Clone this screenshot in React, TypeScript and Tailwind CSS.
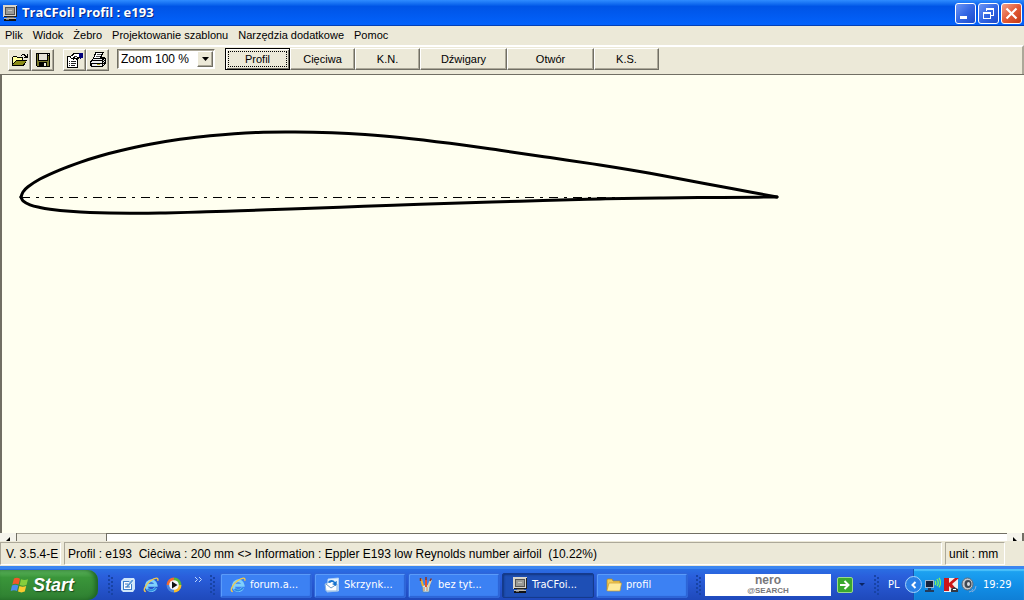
import React from "react";

type Point = [number, number];

const upper: Point[] = [
  [777, 197], [733, 188.8], [650, 173.3], [600, 165], [550, 157.6],
  [500, 150.3], [450, 143.3], [400, 137.4], [365, 134.5], [332, 132.8], [295, 132], [258, 132.4],
  [210, 135.7], [180, 139.3], [150, 144.3], [120, 150.8], [100, 156],
  [80, 162.3], [60, 169.8], [40, 179], [28, 186.8], [23, 192], [21, 197],
];

const lower: Point[] = [
  [21, 197], [23, 200.8], [30, 204.8], [40, 207.5], [50, 209.2], [70, 211.3], [90, 212.5],
  [130, 213.3], [160, 213.1], [200, 212], [240, 210.7], [290, 209],
  [340, 207.2], [400, 205], [460, 203], [520, 201.2],
  [600, 199], [660, 198], [720, 197.4], [777, 197],
];

function tangent(points: Point[], i: number): Point {
  const a = points[Math.max(0, i - 1)];
  const b = points[Math.min(points.length - 1, i + 1)];
  const length = Math.hypot(b[0] - a[0], b[1] - a[1]);
  return [(b[0] - a[0]) / length, (b[1] - a[1]) / length];
}

function smoothPath(points: Point[]): string {
  let d = `M${points[0][0]} ${points[0][1]}`;
  for (let i = 0; i < points.length - 1; i++) {
    const p = points[i];
    const q = points[i + 1];
    const t = tangent(points, i);
    const u = tangent(points, i + 1);
    const h = Math.hypot(q[0] - p[0], q[1] - p[1]) / 3;
    d += `C${p[0] + t[0] * h} ${p[1] + t[1] * h} ${q[0] - u[0] * h} ${q[1] - u[1] * h} ${q[0]} ${q[1]}`;
  }
  return d;
}

function ComputerIcon() {
  return (
    <svg width="16" height="16" viewBox="0 0 16 16" className="shrink-0" shapeRendering="crispEdges" aria-hidden="true">
      <path d="M1 0h14v12H1z" fill="#d8d4cb" />
      <path d="M14 1h1v11H2v-1h12z" fill="#222" />
      <path d="M3 2h10v8H3z" fill="#555" />
      <path d="M4 3h8v6H4z" fill="#9a9a96" />
      <path d="M6 5h4v1H6z" fill="#c7c7c0" />
      <path d="M5 12h7v1H5z" fill="#777" />
      <path d="M2 13h12v1H2z" fill="#bdb9b0" />
      <path d="M2 14h12v2H2z" fill="#111" />
      <path d="M4 14h3v1H4z" fill="#777" />
    </svg>
  );
}

function OpenIcon() {
  return (
    <svg width="18" height="16" viewBox="0 0 18 16" shapeRendering="crispEdges" aria-hidden="true">
      <path d="M1 5h1V4h4v1h6v3h4L13 14H1z" fill="#000" />
      <path d="M2 5h4v1h5v2H5L2 12z" fill="#ffff9c" />
      <path d="M5 9h10l-3 4H2z" fill="#8c8c18" />
      <path d="M10 3h1V2h3v1h1v1h1V2h1v4h-4V5h1V4h-1V3h-2v1h-1z" fill="#000" />
    </svg>
  );
}

function SaveIcon() {
  return (
    <svg width="16" height="16" viewBox="0 0 16 16" shapeRendering="crispEdges" aria-hidden="true">
      <path d="M1 1h14v14H2l-1-1z" fill="#000" />
      <path d="M2 2h1v7h10V4h1v10h-2v-4H4v4H2z" fill="#77772b" />
      <path d="M4 2h8v6H4z" fill="#e6e3d8" />
      <path d="M13 2h1v1h-1zM9 11h2v3H9z" fill="#ece9d8" />
    </svg>
  );
}

function PropertiesIcon() {
  return (
    <svg width="18" height="16" viewBox="0 0 18 16" shapeRendering="crispEdges" aria-hidden="true">
      <path d="M1 4h11v12H1z" fill="#000" />
      <path d="M2 5h9v10H2z" fill="#fff" />
      <path d="M3 9h1v1H3zM5 9h5v1H5zM3 11h1v1H3zM5 11h5v1H5zM3 13h1v1H3zM5 13h4v1H5z" fill="#222" />
      <path d="M4 4h1V3h1V2h1V1h6v1h1v4h-1v1h-2v1h-1V7H8v1H7V7H5V6H4z" fill="#000" />
      <path d="M5 4h2V3h1V2h5v3h-2v1H9V5H7v1H5z" fill="#fff" />
      <path d="M8 4h3v1H8z" fill="#333" />
      <path d="M13 1h4v5h-2v1h-1V5h-1z" fill="#00007c" />
    </svg>
  );
}

function PrintIcon() {
  return (
    <svg width="18" height="16" viewBox="0 0 18 16" shapeRendering="crispEdges" aria-hidden="true">
      <path d="M6 0h9v1h-1v2h-1v2h3v1h1v6h-1v1h-1v1h-1v1H2v-1H1V9h1V8h1V7h1V5h1V2h1z" fill="#000" />
      <path d="M7 1h6v1h-1v2h-1v2H5V5h1V3h1z" fill="#fff" />
      <path d="M8 2h4v1H8zM7 4h4v1H7z" fill="#555" />
      <path d="M4 7h9v1H4zM3 9h10v2H2v-1h1zM3 12h10v2H3z" fill="#eee" />
      <path d="M14 8h1v1h-1zM15 7h1v1h-1zM14 10h1v1h-1zM15 9h1v1h-1zM14 12h1v1h-1z" fill="#ddd" />
      <path d="M8 12h3v1H8z" fill="#a89e20" />
    </svg>
  );
}

function WindowsFlag() {
  return (
    <svg width="20" height="18" viewBox="0 0 20 18" className="shrink-0" aria-hidden="true">
      <path d="M4 2.500Q7 1 10 2.800L8.600 8.500Q5.500 7 2.300 8.500Z" fill="#f0582a" />
      <path d="M11 3.300Q14.500 4.800 18 3.300L16.500 9Q13 10.500 9.700 9Z" fill="#86cf3c" />
      <path d="M2 9.500Q5.200 8 8.300 9.600L7 15Q4 13.500 .7 15Z" fill="#4a8cf0" />
      <path d="M9.400 10.100Q12.800 11.600 16.200 10L14.800 15.600Q11.500 17.200 8 15.600Z" fill="#fccb30" />
    </svg>
  );
}

function IeIcon() {
  return (
    <svg width="16" height="16" viewBox="0 0 17 17" className="shrink-0" aria-hidden="true">
      <path d="M13.500 11.500A5.200 5.200 0 1 1 14 8.800H5" fill="none" stroke="#7fd0fc" strokeWidth="3" />
      <path d="M13.500 11.500A5.200 5.200 0 0 1 5 12.500" fill="none" stroke="#2b8ae0" strokeWidth="2" />
      <path d="M3 15.500C-1 15 3 7.500 8 4 13 .3 17 .2 15.600 4" fill="none" stroke="#f3c84a" strokeWidth="1.500" />
    </svg>
  );
}

function DesktopIcon() {
  return (
    <svg width="16" height="16" viewBox="0 0 16 16" className="shrink-0" aria-hidden="true">
      <path d="M4 1h10l1 2v9l-2 3H3l-2-2V4z" fill="#cfe6fa" />
      <path d="M3 4h9v9H3z" fill="#3b7ecb" />
      <path d="M4 5h7v7H4z" fill="#fff" />
      <path d="m6 9 6-7 2 1.500-6 7-2 .5z" fill="#5a9ad8" stroke="#fff" strokeWidth=".8" />
      <path d="M5 7h3M5 10h5" stroke="#3774b8" />
    </svg>
  );
}

function MediaIcon() {
  return (
    <svg width="16" height="16" viewBox="0 0 16 16" className="shrink-0" aria-hidden="true">
      <path d="M8 8V.5A7.500 7.500 0 0 0 .5 8z" fill="#f36a2d" />
      <path d="M8 8h7.500A7.500 7.500 0 0 0 8 .5z" fill="#58b53a" />
      <path d="M8 8v7.500A7.500 7.500 0 0 0 15.500 8z" fill="#f6bb2d" />
      <path d="M8 8H.5A7.500 7.500 0 0 0 8 15.500z" fill="#4b86dd" />
      <circle cx="8" cy="8" r="4.800" fill="#f5f7fb" />
      <path d="m6 4.500 5.500 3.500L6 11.500z" fill="#111" />
    </svg>
  );
}

function MailIcon() {
  return (
    <svg width="16" height="16" viewBox="0 0 16 16" className="shrink-0" aria-hidden="true">
      <path d="m4 2 10.500-1v13L3 15z" fill="#e2f0fc" stroke="#b9d6f2" strokeWidth=".8" />
      <path d="m1 7 7-3 5 3v7H2z" fill="#fff" stroke="#8ab4e0" />
      <path d="m2 7 5 4 6-4" fill="none" stroke="#6d9ac6" />
      <path d="M4 5a4 4 0 0 1 7 0l2-1-1 5-4-2 2-1a3 3 0 0 0-4 0z" fill="#1774cf" />
    </svg>
  );
}

function PaintIcon() {
  return (
    <svg width="16" height="16" viewBox="0 0 16 16" className="shrink-0" aria-hidden="true">
      <path d="M4 8h8l-1 7H5z" fill="#d0e3ed" stroke="#56829f" strokeWidth=".7" />
      <path d="M5 9 3 2" stroke="#f2b32d" strokeWidth="2" />
      <path d="M8 10V2" stroke="#e6532b" strokeWidth="2" />
      <path d="m10 10 3-7" stroke="#e2d2ac" strokeWidth="2" />
      <path d="M2.500 1v3M8 0v3M13.300 1.500 12 4" stroke="#8d3520" strokeWidth="1.500" />
      <path d="M6 10v4M9 10v4" stroke="#d28b48" />
    </svg>
  );
}

function FolderIcon() {
  return (
    <svg width="16" height="16" viewBox="0 0 16 16" className="shrink-0" aria-hidden="true">
      <path d="M1 13V3q0-1 1-1h4l1 2h7v3" fill="#f2cc58" stroke="#b58516" strokeWidth=".7" />
      <path d="M1 13.500 3 6H15.500L14 14H1.500z" fill="#fdeb9c" stroke="#c99a2c" strokeWidth=".7" />
    </svg>
  );
}

function NetworkIcon() {
  return (
    <svg width="17" height="16" viewBox="0 0 17 16" className="shrink-0" aria-hidden="true">
      <path d="M1 3h9v8H1z" fill="#9eb8cf" />
      <path d="M2 4h7v6H2z" fill="#14233c" />
      <path d="M4 11h3v2h3v2H1v-2h3z" fill="#233b5b" />
      <path d="M11 4q1.500 2 0 4M13 2q2.500 4 0 7M15 .8q3 5 0 9.500" fill="none" stroke="#7df55e" strokeWidth="1.300" />
    </svg>
  );
}

function ShieldIcon() {
  return (
    <svg width="16" height="16" viewBox="0 0 16 16" className="shrink-0" aria-hidden="true">
      <path d="M1 1h14v14H1z" fill="#efeff0" />
      <path d="M1 1h5v5l6-5h4L9 7l6 7h-4L6 9v5H1z" fill="#cc1719" />
      <path d="M8 15v-3l3-2 4 2v3z" fill="#343943" />
      <path d="M10 12h3v1h-3z" fill="#fff" />
    </svg>
  );
}

function SpeakerIcon() {
  return (
    <svg width="16" height="16" viewBox="0 0 16 16" className="shrink-0" aria-hidden="true">
      <ellipse cx="6.500" cy="7" rx="5.500" ry="6" fill="#c3c7cd" stroke="#5d6878" />
      <ellipse cx="7" cy="7" rx="3.500" ry="4" fill="#3f4854" />
      <ellipse cx="7.500" cy="7" rx="1.500" ry="2" fill="#d7dce3" />
      <path d="M11 15q4-2 4-6M8 15q3 0 4-3" fill="none" stroke="#89aedb" />
    </svg>
  );
}

function Grip() {
  return (
    <svg width="6" height="22" viewBox="0 0 6 22" className="shrink-0" shapeRendering="crispEdges" aria-hidden="true">
      {[1, 5, 9, 13, 17].map((y) => (
        <path key={y} d={`M0 ${y}h2v2H0zM3 ${y + 2}h2v2H3z`} fill="#1743a5" />
      ))}
    </svg>
  );
}

const menus = ["Plik", "Widok", "Żebro", "Projektowanie szablonu", "Narzędzia dodatkowe", "Pomoc"];

const tools = [
  { label: "Otwórz", icon: <OpenIcon /> },
  { label: "Zapisz", icon: <SaveIcon /> },
  { label: "Właściwości", icon: <PropertiesIcon /> },
  { label: "Drukuj", icon: <PrintIcon /> },
];

const raised = "border border-t-white border-l-white border-r-[#716f64] border-b-[#716f64] shadow-[inset_-1px_-1px_0_#aca899]";

const tabs = [
  { label: "Cięciwa", width: "w-[65px]" },
  { label: "K.N.", width: "w-[65px]" },
  { label: "Dźwigary", width: "w-[87px]" },
  { label: "Otwór", width: "w-[87px]" },
  { label: "K.S.", width: "w-[65px]" },
];

const tasks = [
  { label: "forum.a...", icon: <IeIcon />, active: false },
  { label: "Skrzynk...", icon: <MailIcon />, active: false },
  { label: "bez tyt...", icon: <PaintIcon />, active: false },
  { label: "TraCFoi...", icon: <ComputerIcon />, active: true },
  { label: "profil", icon: <FolderIcon />, active: false },
];

function TitleBar() {
  const frame = "flex size-[21px] items-center justify-center rounded-[3px] border border-white";
  const blue = "bg-linear-to-br from-[#6d95f5] via-[#3467e4] to-[#1c4acb]";
  return (
    <header className="flex h-[26px] shrink-0 items-center bg-linear-to-b from-[#2f8cff] via-[#0054e6] via-25% to-[#0363fd] px-[2px] shadow-[inset_0_-1px_0_#0340b5]">
      <ComputerIcon />
      <h1 className="ml-[4px] flex-1 font-['Open_Sans',sans-serif] text-[13px] font-bold text-white [text-shadow:1px_1px_0_#0a2a83]">
        TraCFoil Profil : e193
      </h1>
      <div className="flex gap-[2px]">
        <button aria-label="Minimalizuj" className={`${frame} ${blue}`}>
          <svg width="13" height="13" aria-hidden="true"><path d="M1 9h7v3H1z" fill="#fff" /></svg>
        </button>
        <button aria-label="Przywróć" className={`${frame} ${blue}`}>
          <svg width="13" height="13" shapeRendering="crispEdges" aria-hidden="true">
            <path d="M4 1h8v8H9V8h2V3H5v1H4zM1 5h8v7H1zM2 7v4h6V7z" fill="#fff" fillRule="evenodd" />
          </svg>
        </button>
        <button aria-label="Zamknij" className={`${frame} bg-linear-to-br from-[#f0a088] via-[#e35a36] to-[#c23a14]`}>
          <svg width="13" height="13" aria-hidden="true"><path d="m1.500 1.500 10 10m0-10-10 10" stroke="#fff" strokeWidth="2.200" /></svg>
        </button>
      </div>
    </header>
  );
}

function Toolbar() {
  return (
    <div className="flex h-[29px] shrink-0 items-start border-t-2 border-r-2 border-t-white border-r-[#aca899] pt-px pl-[8px]">
      <div className="flex pt-px">
        {tools.map((tool, i) => (
          <button
            key={tool.label}
            aria-label={tool.label}
            className={`flex h-[22px] w-[23px] items-center justify-center ${raised} ${i === 2 ? "ml-[9px]" : ""}`}
          >
            {tool.icon}
          </button>
        ))}
      </div>
      <div className="relative ml-[8px] mt-px h-[20px] w-[98px] border border-[#716f64] border-r-white border-b-white bg-white shadow-[inset_1px_1px_0_#aca899]">
        <select aria-label="Zoom" className="block h-[18px] w-full appearance-none bg-transparent pl-[3px] text-[12px] leading-[18px] outline-none">
          <option>Zoom 100 %</option>
        </select>
        <span className={`pointer-events-none absolute right-px top-px flex h-[16px] w-[16px] items-center justify-center bg-[#ece9d8] ${raised}`}>
          <svg width="7" height="4" aria-hidden="true"><path d="M0 0h7L3.500 4z" /></svg>
        </span>
      </div>
      <div className="ml-[10px] flex text-[11px]">
        <button className="h-[22px] w-[65px] border border-black p-px shadow-[inset_1px_1px_0_#fff,inset_-1px_-1px_0_#716f64]">
          <span className="mx-px flex h-[16px] items-center justify-center border border-dotted border-black">Profil</span>
        </button>
        {tabs.map((tab) => (
          <button key={tab.label} className={`h-[22px] ${tab.width} ${raised}`}>{tab.label}</button>
        ))}
      </div>
    </div>
  );
}

function Taskbar() {
  return (
    <footer className="flex h-[34px] shrink-0 items-end bg-linear-to-b from-[#2a74e6] from-0% via-[#2a5fdc] via-30% to-[#1f49bb] font-['DejaVu_Sans_Condensed','DejaVu_Sans',sans-serif] text-[11px] text-white shadow-[inset_0_3px_0_#3b86f0]">
      <button className="flex h-[30px] w-[98px] items-center gap-[3px] rounded-r-[10px] bg-linear-to-b from-[#5fb75f] via-[#3a963a] via-25% to-[#2f7f31] pl-[10px] shadow-[inset_-3px_0_4px_#1f6425]">
        <WindowsFlag />
        <span className="font-['Liberation_Sans',sans-serif] text-[18px] leading-[24px] font-bold italic [text-shadow:1px_1px_1px_#1c4b1c]">Start</span>
      </button>
      <div className="flex h-[30px] items-center pl-[10px]">
        <Grip />
        <div className="ml-[6px] flex items-center gap-[7px]">
          <button aria-label="Pulpit"><DesktopIcon /></button>
          <button aria-label="Internet Explorer"><IeIcon /></button>
          <button aria-label="Media Player"><MediaIcon /></button>
        </div>
        <button aria-label="Więcej" className="mb-[12px] ml-[12px]">
          <svg width="9" height="7" fill="none" stroke="#bcd6ff" aria-hidden="true"><path d="m1 1 2.500 2.500L1 6M5 1l2.500 2.500L5 6" /></svg>
        </button>
        <span className="ml-[7px] flex"><Grip /></span>
      </div>
      <div className="ml-[4px] flex h-[30px] min-w-0 flex-1 items-center gap-[2px]">
        {tasks.map((task) => (
          <button
            key={task.label}
            className={`flex h-[25px] w-[92px] items-center gap-[4px] rounded-[2px] border pl-[9px] ${
              task.active
                ? "border-[#153a8c] bg-[#1e4fb5] shadow-[inset_1px_1px_2px_#12357f]"
                : "border-[#2f66d8] bg-[#3c81f3] shadow-[inset_1px_1px_0_#5a9bfa,inset_-1px_-1px_1px_#2b62d4]"
            }`}
          >
            {task.icon}
            <span className="whitespace-nowrap">{task.label}</span>
          </button>
        ))}
        <span className="ml-[6px] flex"><Grip /></span>
      </div>
      <div className="flex h-[30px] items-center">
        <button aria-label="Nero Search" className="flex h-[22px] w-[126px] flex-col items-center justify-center bg-white font-['Liberation_Sans',sans-serif] font-bold text-[#77777b]">
          <span className="text-[12px] leading-[11px]">nero</span>
          <span className="text-[8px] leading-[10px]">@SEARCH</span>
        </button>
        <button aria-label="Szukaj" className="ml-[6px] flex size-[16px] items-center justify-center rounded-[2px] border border-[#9ad98c] bg-[#3aa82f]">
          <svg width="12" height="10" aria-hidden="true"><path d="M1 5h8M5.500 1l4 4-4 4" fill="none" stroke="#fff" strokeWidth="2" /></svg>
        </button>
        <svg width="6" height="4" className="ml-[6px]" aria-hidden="true"><path d="M0 0h6L3 3z" fill="#0a2463" /></svg>
        <span className="ml-[9px] flex"><Grip /></span>
        <span className="ml-[8px] w-[17px]">PL</span>
      </div>
      <div className="flex h-[31px] w-[119px] items-center">
        <button aria-label="Pokaż ukryte ikony" className="z-10 flex size-[17px] shrink-0 items-center justify-center rounded-full border border-[#a8d4fb] bg-[#2a80e6]">
          <svg width="8" height="8" aria-hidden="true"><path d="M5.500 1 2.500 4l3 3" fill="none" stroke="#fff" strokeWidth="2" /></svg>
        </button>
        <div className="-ml-[9px] flex h-full flex-1 items-center gap-[2px] border-l border-[#1a4fae] bg-linear-to-b from-[#1fa5f2] via-[#1290e8] to-[#0f7fd6] pt-px pl-[10px] shadow-[inset_0_2px_1px_#4bc0fa]">
          <NetworkIcon />
          <ShieldIcon />
          <SpeakerIcon />
          <time className="ml-[4px]">19:29</time>
        </div>
      </div>
    </footer>
  );
}

export default function App() {
  const panel = "flex items-center border border-t-[#aca899] border-l-[#aca899] border-r-white border-b-white whitespace-pre";
  return (
    <div className="flex h-screen flex-col overflow-hidden bg-[#ece9d8] font-['Liberation_Sans',Arial,sans-serif] text-black">
      <TitleBar />
      <nav className="flex h-[19px] shrink-0 items-center gap-[10px] pl-[5px] text-[11px]">
        {menus.map((menu) => (
          <button key={menu} className="whitespace-nowrap">{menu}</button>
        ))}
      </nav>
      <Toolbar />
      <main className="min-h-0 flex-1 overflow-hidden border-t border-l-2 border-[#716f64] bg-[#fffff0]">
        <svg width="1022" height="458" viewBox="2 75 1022 458" role="img" aria-label="Profil e193">
          <path d="M21 197.500H777" stroke="#000" strokeDasharray="9 6 3 6" shapeRendering="crispEdges" />
          <path d={smoothPath(upper)} fill="none" stroke="#000" strokeWidth="3" strokeLinecap="round" />
          <path d={smoothPath(lower)} fill="none" stroke="#000" strokeWidth="3" strokeLinecap="round" />
        </svg>
      </main>
      <div className="flex h-[8px] shrink-0 bg-[#f5f4ec]">
        <span className="flex w-[17px] items-end justify-center border-r border-[#716f64]">
          <svg width="4" height="4" aria-hidden="true"><path d="M4 0v4H0z" /></svg>
        </span>
        <span className="w-[89px] border-t border-[#aca899] bg-[#f0eee2]" />
        <span className="flex-1 border-t border-l border-[#716f64] bg-white" />
        <span className="flex w-[17px] items-end justify-center border-r-2 border-[#716f64]">
          <svg width="4" height="4" aria-hidden="true"><path d="M0 0v4h4z" /></svg>
        </span>
      </div>
      <div className="flex h-[25px] shrink-0 gap-[3px] pt-px pr-[19px] pb-px text-[12px]" role="status">
        <span className={`${panel} w-[61px] pl-[5px]`}>V. 3.5.4-E</span>
        <span className={`${panel} min-w-0 flex-1 pl-[3px]`}>{"Profil : e193  Ciêciwa : 200 mm <> Information : Eppler E193 low Reynolds number airfoil  (10.22%)"}</span>
        <span className={`${panel} w-[60px] pl-[3px]`}>unit : mm</span>
      </div>
      <Taskbar />
    </div>
  );
}
